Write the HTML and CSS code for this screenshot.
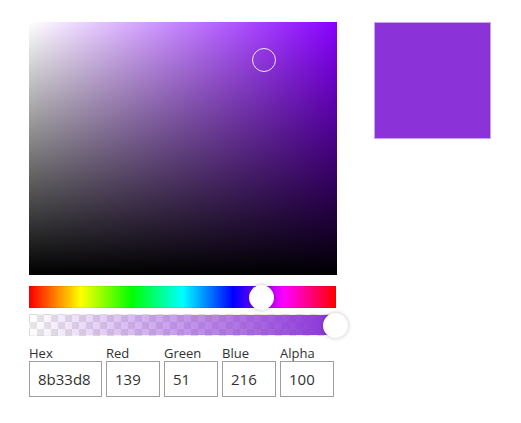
FILE: index.html
```html
<!DOCTYPE html>
<html lang="en">
<head>
    <meta charset="UTF-8">
    <meta name="viewport" content="width=device-width, initial-scale=1.0">
    <title>Color picker</title>
    <link rel="stylesheet" href="styles.css">
</head>
<body>

<div class="picker">
    <div class="panel">
        <!-- saturation / value area -->
        <div class="area">
            <div class="area-thumb"></div>
        </div>

        <!-- hue -->
        <div class="slider hue">
            <div class="slider-thumb hue-thumb"></div>
        </div>

        <!-- alpha -->
        <div class="slider alpha">
            <div class="alpha-fill"></div>
            <div class="slider-thumb alpha-thumb"></div>
        </div>

        <div class="fields">
            <label class="field field-hex">
                <span class="field-label">Hex</span>
                <input class="field-input" type="text" value="8b33d8">
            </label>
            <label class="field">
                <span class="field-label">Red</span>
                <input class="field-input" type="text" value="139">
            </label>
            <label class="field">
                <span class="field-label">Green</span>
                <input class="field-input" type="text" value="51">
            </label>
            <label class="field">
                <span class="field-label">Blue</span>
                <input class="field-input" type="text" value="216">
            </label>
            <label class="field">
                <span class="field-label">Alpha</span>
                <input class="field-input" type="text" value="100">
            </label>
        </div>
    </div>

    <div class="preview"></div>
</div>

</body>
</html>
```

FILE: styles.css
```css
body {
    margin: 0;
    background-color: #ffffff;
    font-family: "Open Sans", "Noto Sans", Arial, sans-serif;
    color: #323130;
}
.picker {
    display: flex;
    align-items: flex-start;
    padding: 22px 0 0 29px;
}
.panel {
    width: 308px;
}
.preview {
    width: 115px;
    height: 115px;
    margin-left: 37px;
    background-color: #8b33d8;
    border: 1px solid #c9a6ec;
}

/* colour area */
.area {
    position: relative;
    height: 253px;
    background:
        linear-gradient(to top, #000000, rgba(0, 0, 0, 0)),
        linear-gradient(to right, #ffffff, hsl(272, 100%, 50%));
}
.area-thumb {
    position: absolute;
    left: 223px;
    top: 26px;
    width: 22px;
    height: 22px;
    border: 1.5px solid #f4e8ff;
    border-radius: 50%;
    box-shadow: 0 0 1px rgba(0, 0, 0, 0.3);
}

/* sliders */
.slider {
    position: relative;
    width: 305px;
    height: 20px;
    border: 1px solid rgba(0, 0, 0, 0.06);
}
.hue {
    margin-top: 11px;
    background: linear-gradient(to right, #ff0000, #ffff00, #00ff00, #00ffff, #0000ff, #ff00ff, #ff0000);
}
.alpha {
    margin-top: 6px;
    background-color: #ffffff;
    background-image: conic-gradient(#e6e6e6 25%, #ffffff 0 50%, #e6e6e6 0 75%, #ffffff 0);
    background-size: 14px 14px;
}
.alpha-fill {
    position: absolute;
    inset: 0;
    background: linear-gradient(to right, rgba(139, 51, 216, 0), rgba(139, 51, 216, 1));
}
.slider-thumb {
    position: absolute;
    top: 50%;
    width: 25px;
    height: 25px;
    margin: -12.5px 0 0 -12.5px;
    background-color: #ffffff;
    border-radius: 50%;
    box-shadow: 0 0 4px rgba(0, 0, 0, 0.25);
}
.hue-thumb {
    left: 231px;
}
.alpha-thumb {
    left: 305px;
}

/* text fields */
.fields {
    display: flex;
    gap: 4px;
    margin-top: 10px;
}
.field {
    display: flex;
    flex-direction: column;
    width: 54px;
}
.field-hex {
    width: 73px;
}
.field-label {
    font-size: 13px;
    line-height: 15px;
}
.field-input {
    box-sizing: border-box;
    width: 100%;
    height: 36px;
    margin: 0;
    padding: 0 0 0 8px;
    border: 1px solid #a19f9d;
    border-radius: 0;
    font-family: "Open Sans", "Noto Sans", Arial, sans-serif;
    font-size: 15px;
    color: #323130;
    outline: none;
}
```
